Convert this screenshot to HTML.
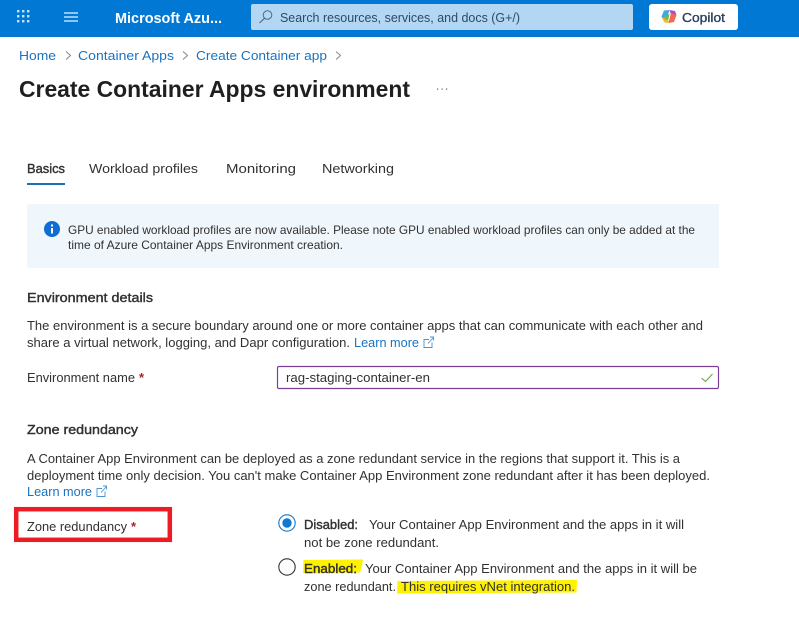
<!DOCTYPE html>
<html><head><meta charset="utf-8"><title>Create Container Apps environment</title>
<style>
html,body{margin:0;padding:0;background:#fff;width:799px;height:621px;overflow:hidden}
svg{display:block}
text{font-family:"Liberation Sans",sans-serif;font-size:13px;fill:#323130}
.l{fill:#1a73c0}
.b{font-weight:bold}
.s{stroke:#323130;stroke-width:.4px}
</style></head><body>
<svg width="799" height="621" viewBox="0 0 799 621" xmlns="http://www.w3.org/2000/svg">
<rect width="799" height="621" fill="#fff"/>
<rect width="799" height="37" fill="#0078d4"/>
<g fill="#c5e4fa">
<rect x="17" y="10" width="2.4" height="2.4"/><rect x="22" y="10" width="2.4" height="2.4"/><rect x="27" y="10" width="2.400" height="2.4"/>
<rect x="17" y="15" width="2.4" height="2.4"/><rect x="22" y="15" width="2.4" height="2.4"/><rect x="27" y="15" width="2.400" height="2.4"/>
<rect x="17" y="20" width="2.4" height="2.4"/><rect x="22" y="20" width="2.4" height="2.4"/><rect x="27" y="20" width="2.400" height="2.4"/>
</g>
<g fill="#8cc6f2">
<rect x="64" y="12" width="14" height="2"/><rect x="64" y="16" width="14" height="2"/><rect x="64" y="20" width="14" height="2"/>
</g>
<text x="115" y="23" textLength="107" lengthAdjust="spacingAndGlyphs" class="b" style="font-size:15px;fill:#fff">Microsoft Azu...</text>
<rect x="251" y="4" width="382" height="26" rx="2" fill="#b3d6f3"/>
<circle cx="267.500" cy="15" r="4.3" fill="none" stroke="#4a6a88" stroke-width="1"/>
<path d="M264.500 18.300L259.500 23" stroke="#4a6a88" stroke-width="1.1" fill="none"/>
<text x="280" y="22" textLength="240" lengthAdjust="spacingAndGlyphs" style="fill:#2b4a68">Search resources, services, and docs (G+/)</text>
<rect x="649" y="4" width="89" height="26" rx="3" fill="#fff"/>
<path d="M664 10.500L669.500 10L668 15L664.500 22L661.500 16.500Z" fill="#3fa9e0"/>
<path d="M669.500 10L675 11L676.500 15L671 14.500Z" fill="#b050c8"/>
<path d="M671 13L676.500 15L674 22L668.500 23Z" fill="#ef6a5a"/>
<path d="M662 18L668 17L669 23L664.500 22.500Z" fill="#f2b93c"/>
<path d="M665 16L669.500 14L668.500 19L664.500 20Z" fill="#6dbb4a"/>
<text x="682" y="22" textLength="43" lengthAdjust="spacingAndGlyphs" style="fill:#2a3f5f;stroke:#2a3f5f;stroke-width:.35px">Copilot</text>

<text x="19" y="60" textLength="37" lengthAdjust="spacingAndGlyphs" class="l">Home</text>
<path d="M66 51.500L70.500 55.500L66 59.500M183 51.500L187.500 55.500L183 59.500M336 51.500L340.500 55.500L336 59.500" fill="none" stroke="#8a8886" stroke-width="1"/>
<text x="78" y="60" textLength="96" lengthAdjust="spacingAndGlyphs" class="l">Container Apps</text>
<text x="196" y="60" textLength="131" lengthAdjust="spacingAndGlyphs" class="l">Create Container app</text>
<text x="19" y="97" textLength="391" lengthAdjust="spacingAndGlyphs" class="b" style="font-size:23px;fill:#201f1e">Create Container Apps environment</text>
<g fill="#605e5c"><rect x="437" y="88.500" width="1.2" height="1.2"/><rect x="441.500" y="88.500" width="1.2" height="1.2"/><rect x="446" y="88.500" width="1.2" height="1.2"/></g>

<text x="27" y="173" textLength="38" lengthAdjust="spacingAndGlyphs" class="s">Basics</text>
<rect x="27" y="183" width="38" height="2" fill="#1a6fb5"/>
<text x="89" y="173" textLength="109" lengthAdjust="spacingAndGlyphs">Workload profiles</text>
<text x="226" y="173" textLength="70" lengthAdjust="spacingAndGlyphs">Monitoring</text>
<text x="322" y="173" textLength="72" lengthAdjust="spacingAndGlyphs">Networking</text>

<rect x="27" y="204" width="692" height="64" fill="#eff6fc"/>
<circle cx="52" cy="229" r="8" fill="#0f6cd0"/>
<rect x="51" y="228" width="2" height="5.500" fill="#fff"/><rect x="51" y="224.500" width="2" height="2" fill="#fff"/>
<text x="68" y="234" textLength="627" lengthAdjust="spacingAndGlyphs" style="font-size:12px">GPU enabled workload profiles are now available. Please note GPU enabled workload profiles can only be added at the</text>
<text x="68" y="249" textLength="275" lengthAdjust="spacingAndGlyphs" style="font-size:12px">time of Azure Container Apps Environment creation.</text>

<text x="27" y="302" textLength="126" lengthAdjust="spacingAndGlyphs" class="s">Environment details</text>
<text x="27" y="330" textLength="676" lengthAdjust="spacingAndGlyphs">The environment is a secure boundary around one or more container apps that can communicate with each other and</text>
<text x="27" y="347" textLength="323" lengthAdjust="spacingAndGlyphs">share a virtual network, logging, and Dapr configuration.</text>
<text x="354" y="347" textLength="65" lengthAdjust="spacingAndGlyphs" class="l">Learn more</text>
<path d="M429 339.500H424V347.500H432V342.500M428 343.500L433.500 337.500M430 337H433.500V340.500" fill="none" stroke="#4a93cf" stroke-width=".9"/>

<text x="27" y="382" textLength="108" lengthAdjust="spacingAndGlyphs">Environment name</text>
<text x="139" y="382" class="b" style="fill:#a4262c">*</text>
<rect x="277.500" y="366.500" width="441" height="22" rx="1.500" fill="#fff" stroke="#7b3f98" stroke-width="1.2"/>
<text x="286" y="382" textLength="144" lengthAdjust="spacingAndGlyphs">rag-staging-container-en</text>
<path d="M701.500 378L705.500 381.500L712.500 374" fill="none" stroke="#64a845" stroke-width="1.1"/>

<text x="27" y="434" textLength="111" lengthAdjust="spacingAndGlyphs" class="s">Zone redundancy</text>
<text x="27" y="463" textLength="653" lengthAdjust="spacingAndGlyphs">A Container App Environment can be deployed as a zone redundant service in the regions that support it. This is a</text>
<text x="27" y="480" textLength="683" lengthAdjust="spacingAndGlyphs">deployment time only decision. You can't make Container App Environment zone redundant after it has been deployed.</text>
<text x="27" y="496" textLength="65" lengthAdjust="spacingAndGlyphs" class="l">Learn more</text>
<path d="M102 488.500H97V496.500H105V491.500M101 492.500L106.500 486.500M103 486H106.500V489.500" fill="none" stroke="#4a93cf" stroke-width=".9"/>

<rect x="16.200" y="509.200" width="153.600" height="30.600" fill="none" stroke="#ed1c24" stroke-width="4.500"/>
<text x="27" y="531" textLength="100" lengthAdjust="spacingAndGlyphs">Zone redundancy</text>
<text x="131" y="531" class="b" style="fill:#a4262c">*</text>

<circle cx="287" cy="523" r="8.200" fill="#fff" stroke="#0f78d0" stroke-width="1.100"/>
<circle cx="287" cy="523" r="4.700" fill="#0f78d0"/>
<circle cx="287" cy="567" r="8.200" fill="#fff" stroke="#323130" stroke-width="1.100"/>

<text x="304" y="529" textLength="54" lengthAdjust="spacingAndGlyphs" class="s">Disabled:</text>
<text x="369" y="529" textLength="315" lengthAdjust="spacingAndGlyphs">Your Container App Environment and the apps in it will</text>
<text x="304" y="547" textLength="135" lengthAdjust="spacingAndGlyphs">not be zone redundant.</text>

<path d="M303.500 560L363 559.500L362 566L360 572.500L303 573Z" fill="#fff200"/>
<path d="M397.500 581L577 580L576.500 592.500L397 593.500Z" fill="#fff200"/>
<text x="304" y="573" textLength="53" lengthAdjust="spacingAndGlyphs" class="s">Enabled:</text>
<text x="365" y="573" textLength="332" lengthAdjust="spacingAndGlyphs">Your Container App Environment and the apps in it will be</text>
<text x="304" y="591" textLength="92" lengthAdjust="spacingAndGlyphs">zone redundant.</text>
<text x="401" y="591" textLength="174" lengthAdjust="spacingAndGlyphs">This requires vNet integration.</text>
</svg>
</body></html>
